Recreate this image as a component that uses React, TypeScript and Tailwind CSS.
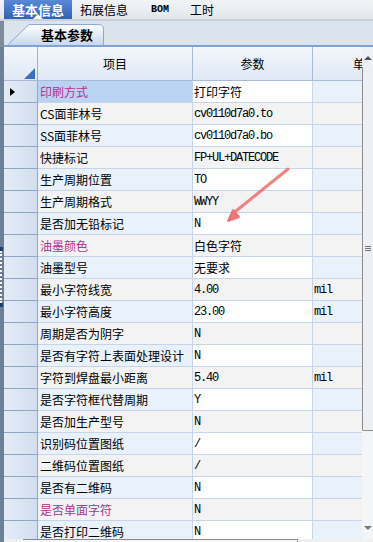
type Row = {
  item: string;
  value: string;
  unit?: string;
  pink?: boolean;
  cn?: boolean;
};

const rows: Row[] = [
  { item: "印刷方式", value: "打印字符", pink: true, cn: true },
  { item: "CS面菲林号", value: "cv0110d7a0.to" },
  { item: "SS面菲林号", value: "cv0110d7a0.bo" },
  { item: "快捷标记", value: "FP+UL+DATECODE" },
  { item: "生产周期位置", value: "TO" },
  { item: "生产周期格式", value: "WWYY" },
  { item: "是否加无铅标记", value: "N" },
  { item: "油墨颜色", value: "白色字符", pink: true, cn: true },
  { item: "油墨型号", value: "无要求", cn: true },
  { item: "最小字符线宽", value: "4.00", unit: "mil" },
  { item: "最小字符高度", value: "23.00", unit: "mil" },
  { item: "周期是否为阴字", value: "N" },
  { item: "是否有字符上表面处理设计", value: "N" },
  { item: "字符到焊盘最小距离", value: "5.40", unit: "mil" },
  { item: "是否字符框代替周期", value: "Y" },
  { item: "是否加生产型号", value: "N" },
  { item: "识别码位置图纸", value: "/" },
  { item: "二维码位置图纸", value: "/" },
  { item: "是否有二维码", value: "N" },
  { item: "是否单面字符", value: "N", pink: true },
  { item: "是否打印二维码", value: "N" },
];

const cjk = "font-['Noto_Sans_CJK_SC',sans-serif]";
const mono = "font-['Liberation_Mono','Noto_Sans_CJK_SC',monospace]";

export default function App() {
  return (
    <div className={`relative w-[373px] h-[542px] overflow-hidden bg-[#e4e9ef] ${cjk} text-black`}>
      {/* TOP TABS */}
      <div className="h-[19px] flex items-end bg-gradient-to-b from-[#f2f4f7] to-[#e1e6ec]">
        <div className="relative ml-[4px] w-[68px] h-[19px] flex items-center justify-center bg-gradient-to-b from-[#5a8ad6] to-[#2f62b4] text-white text-[13px] font-bold leading-none">
          基本信息
          <div className="absolute bottom-0 left-[29px] w-0 h-0 border-l-[5px] border-r-[5px] border-b-[5px] border-l-transparent border-r-transparent border-b-white" />
        </div>
        <div className="ml-[8px] h-[19px] flex items-center text-[12px] leading-none">拓展信息</div>
        <div className={`ml-[23px] h-[19px] flex items-center text-[10px] font-bold leading-none ${mono}`}>BOM</div>
        <div className="ml-[21px] h-[19px] flex items-center text-[12px] leading-none">工时</div>
      </div>
      <div className="h-[2px] bg-[#c9d1da]" />

      {/* SUB TAB STRIP */}
      <div className="flex h-[24px]">
        <div className="w-[4px] bg-[#7d8b9b]" />
        <div className="flex-1 flex items-end bg-[#dbe3ec] pl-[3px]">
          <div className="relative w-[97px] h-[22px] flex items-center justify-end pr-[11px]">
            <svg className="absolute inset-0" width="97" height="22" viewBox="0 0 97 22">
              <defs>
                <linearGradient id="tabg" x1="0" y1="0" x2="0" y2="1">
                  <stop offset="0" stopColor="#ffffff" />
                  <stop offset="1" stopColor="#c7d8ef" />
                </linearGradient>
              </defs>
              <path d="M0.5 22 L22 1.5 L91 1.5 Q96.5 1.5 96.5 6 L96.5 22" fill="url(#tabg)" stroke="#8ea8cc" strokeWidth="1" />
            </svg>
            <span className="relative text-[13px] font-bold leading-none">基本参数</span>
          </div>
        </div>
      </div>
      <div className="flex h-[2px]">
        <div className="w-[4px] bg-[#7d8b9b]" />
        <div className="flex-1 bg-[#7ea2d6]" />
      </div>

      {/* GRID */}
      <div className="flex h-[492px]">
        <div className="w-[4px] flex flex-col bg-[#6e8096]">
          <div className="h-[200px]" />
          <div className="h-[4px] w-[3px] bg-[#1f3f73]" />
          <div className="h-[52px] w-[2px] border-l-[2px] border-dotted border-white" />
          <div className="h-[4px] w-[3px] bg-[#1f3f73]" />
        </div>

        <div className="flex-1 flex flex-col overflow-hidden bg-white">
          {/* HEADER */}
          <div className="flex h-[34px] shrink-0 bg-gradient-to-b from-[#f4f7fc] to-[#dfe8f5] border-b border-[#a9bbd4] text-[12px]">
            <div className="relative w-[34px] border-r border-[#9fb1ca]">
              <svg className="absolute right-[2px] bottom-[1px]" width="11" height="11" viewBox="0 0 11 11">
                <path d="M0 11 L11 11 L11 0 Z" fill="#3b6fc2" />
              </svg>
            </div>
            <div className="w-[155px] flex items-center justify-center border-r border-[#a9bbd4]">项目</div>
            <div className="w-[120px] flex items-center justify-center border-r border-[#a9bbd4]">参数</div>
            <div className="flex-1 flex items-center justify-end overflow-hidden">
              <span className="mr-[-3px]">单</span>
            </div>
          </div>

          {/* ROWS */}
          {rows.map((r, i) => {
            const odd = i % 2 === 0;
            const itemBg = i === 0 ? "bg-[#bad3f3]" : odd ? "bg-[#e9f1fb]" : "bg-[#f3f3f3]";
            const valBg = odd ? "bg-white" : "bg-[#f3f3f3]";
            const unitBg = odd ? "bg-[#e9f1fb]" : "bg-[#f3f3f3]";
            return (
              <div key={i} className="flex h-[22px] shrink-0">
                <div className="w-[34px] relative flex items-center border-r border-b border-r-[#96aac6] border-b-[#8fa6c6] bg-gradient-to-r from-[#e4ecf7] to-[#d2deef]">
                  {i === 0 && (
                    <svg className="absolute left-[6px] top-[7px]" width="5" height="8" viewBox="0 0 5 8">
                      <path d="M0 0 L5 4 L0 8 Z" fill="#000" />
                    </svg>
                  )}
                </div>
                <div className={`w-[155px] flex items-center pl-[2px] border-r border-b border-[#c6d5ea] text-[12px] leading-none whitespace-nowrap ${itemBg} ${r.pink ? "text-[#b5308f]" : "text-black"}`}>
                  {r.item}
                </div>
                <div className={`w-[120px] flex items-center pl-[1px] border-r border-b border-[#c6d5ea] whitespace-nowrap leading-none ${valBg} ${r.cn ? "text-[12px]" : `${mono} text-[12px] tracking-[-1.2px]`}`}>
                  {r.value}
                </div>
                <div className={`flex-1 flex items-center pl-[1px] border-b border-[#c6d5ea] leading-none ${unitBg} ${mono} text-[12px] tracking-[-1.2px]`}>
                  {r.unit ?? ""}
                </div>
              </div>
            );
          })}
        </div>

        {/* VERTICAL SCROLLBAR */}
        <div className="w-[11px] flex flex-col bg-[#f4f5f7]">
          <div className="h-[20px] flex items-start justify-center pt-[9px] bg-[#eef2f8]">
            <div className="w-0 h-0 border-l-[4px] border-r-[4px] border-b-[4px] border-l-transparent border-r-transparent border-b-[#555]" />
          </div>
          <div className="h-[364px] flex flex-col items-center justify-center gap-[1px] bg-[#eceff3] border-l border-b border-[#8c8c8c] rounded-bl-[2px]">
            <div className="w-[6px] h-px bg-[#777]" />
            <div className="w-[6px] h-px bg-[#777]" />
            <div className="w-[6px] h-px bg-[#777]" />
          </div>
          <div className="flex-1" />
          <div className="h-[20px] flex items-start justify-center pt-[7px]">
            <div className="w-0 h-0 border-l-[4px] border-r-[4px] border-t-[4px] border-l-transparent border-r-transparent border-t-[#777]" />
          </div>
        </div>
      </div>

      {/* HORIZONTAL SCROLLBAR */}
      <div className="flex h-[5px]">
        <div className="w-[4px] bg-[#6e8096]" />
        <div className="flex-1 bg-[#f0f0f0] pl-[19px]">
          <div className="w-[275px] h-[5px] border-t border-r border-[#8a8a8a] bg-[#f7f7f7]" />
        </div>
      </div>

      {/* RED ARROW ANNOTATION */}
      <svg className="absolute left-0 top-0 pointer-events-none" width="373" height="542" viewBox="0 0 373 542">
        <line x1="288" y1="169" x2="236" y2="211" stroke="#ef6b6f" strokeOpacity="0.85" strokeWidth="3" strokeLinecap="round" />
        <path d="M228 221 L239 217 L233 210 Z" fill="#ef6b6f" fillOpacity="0.9" stroke="#ef6b6f" strokeOpacity="0.9" strokeWidth="2" strokeLinejoin="round" />
      </svg>
    </div>
  );
}
